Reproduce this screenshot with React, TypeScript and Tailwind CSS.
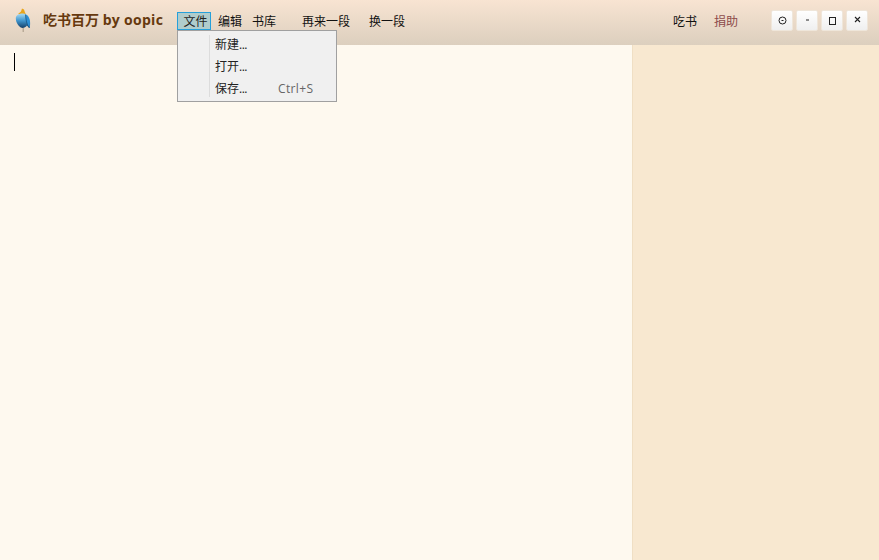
export default function App() {
  const cjk = "font-['Open_Sans','Noto_Sans_CJK_SC',sans-serif]";
  return (
    <div className={`flex h-[560px] w-[879px] flex-col overflow-hidden bg-[#fef9ef] text-[12px] text-[#111] ${cjk}`}>
      <header className="flex h-[45px] shrink-0 items-center bg-gradient-to-b from-[#f8e4d2] to-[#dccfbe] pb-[4px]">
        <svg className="mb-[1px] ml-[15px] h-[24px] w-[16px] shrink-0" viewBox="0 0 16 24">
          <defs>
            <linearGradient id="b" x1="0" x2="0" y1="0" y2="1">
              <stop offset="0" stopColor="#a8dcf5" />
              <stop offset="0.5" stopColor="#3f94cc" />
              <stop offset="1" stopColor="#143f68" />
            </linearGradient>
          </defs>
          <path d="M3 6 L6 3.5 L7 0.5 L9 1.5 L10 4.5 L11 6.5 L6 7 Z" fill="#e9a51c" />
          <path d="M0.8 10.5 C0.8 7 4 5.5 8 5.5 C12 5.5 14.5 8.5 15 13 C15.3 16 15 19 14.5 20 C13 19 12.5 18 12 17.5 C10 20.5 6 20.5 4.5 18.5 C2.5 16.5 0.8 14 0.8 10.5 Z" fill="url(#b)" />
          <path d="M10.5 6.5 C14 7.5 15.5 13 14.5 20 C12.5 18 10.8 13 10.5 6.5 Z" fill="#2c8fd6" />
          <path d="M10.5 6.5 C10.8 13 12.5 18 14.5 20" fill="none" stroke="#123f66" strokeWidth="0.6" />
          <rect x="7.5" y="20" width="1.5" height="4" fill="#b9ab98" />
        </svg>
        <div className="mb-[2px] ml-[12px] w-[134px] shrink-0 text-[14px] font-bold whitespace-nowrap text-[#66390e]">
          吃书百万 <span className="tracking-[0.3px]">by oopic</span>
        </div>
        <nav className="flex h-[18px] items-center">
          <div className="flex h-[18px] w-[34px] items-center justify-center border border-[#26a0da] bg-[#b0cccc] pl-[3px] pt-[2px] text-[#222]">文件</div>
          <div className="ml-[7px] w-[24px] whitespace-nowrap pt-[2px]">编辑</div>
          <div className="ml-[10px] w-[24px] whitespace-nowrap pt-[2px]">书库</div>
          <div className="ml-[26px] w-[48px] whitespace-nowrap pt-[2px]">再来一段</div>
          <div className="ml-[19px] w-[37px] whitespace-nowrap pt-[2px]">换一段</div>
        </nav>
        <div className="ml-auto flex items-center">
          <div className="whitespace-nowrap pt-[2px]">吃书</div>
          <div className="ml-[17px] whitespace-nowrap pt-[2px] text-[#8c4a4a]">捐助</div>
          <div className="ml-[33px] mr-[11px] flex gap-[3px]">
            {[
              <svg key="a" width="9" height="9" viewBox="0 0 9 9" fill="none" stroke="#222"><circle cx="4.5" cy="4.5" r="3.5" /><rect x="3.5" y="4" width="2" height="1" fill="#222" stroke="none" /></svg>,
              <svg key="b" width="9" height="9" viewBox="0 0 9 9"><rect x="3" y="3.5" width="3" height="1" fill="#222" /></svg>,
              <svg key="c" width="9" height="9" viewBox="0 0 9 9" fill="none" stroke="#222"><rect x="1.5" y="1.5" width="6" height="7" /></svg>,
              <svg key="d" width="9" height="9" viewBox="0 0 9 9" fill="none" stroke="#222" strokeWidth="1.1"><path d="M2 1 L7 6 M7 1 L2 6" /></svg>,
            ].map((icon) => (
              <div key={icon.key} className="flex h-[21px] w-[22px] items-center justify-center rounded-[2px] border border-[#efe6da] bg-gradient-to-b from-[#ffffff] to-[#efefef]">
                {icon}
              </div>
            ))}
          </div>
        </div>
      </header>
      <main className="flex min-h-0 flex-1">
        <div className="w-[632px] shrink-0 pl-[14px] pt-[8px]">
          <div className="h-[18px] w-px bg-black" />
        </div>
        <aside className="flex-1 border-l border-[#f0dfc4] bg-[#f8e8d0]" />
      </main>
      <div className="absolute left-[177px] top-[30px] flex h-[72px] w-[160px] border border-[#a0a0a0] bg-[#f0f0f0] text-[12px] text-[#222]">
        <div className="my-[4px] ml-[31px] w-px bg-[#dcdcdc]" />
        <div className="flex flex-1 flex-col pl-[5px] pt-[3px]">
          <div className="flex h-[22px] items-center">新建<span className="tracking-[-0.5px]">...</span></div>
          <div className="flex h-[22px] items-center">打开<span className="tracking-[-0.5px]">...</span></div>
          <div className="flex h-[22px] items-center">
            <span className="w-[63px]">保存<span className="tracking-[-0.5px]">...</span></span>
            <span className="tracking-[0.35px] text-[#666]">Ctrl+S</span>
          </div>
        </div>
      </div>
    </div>
  );
}
